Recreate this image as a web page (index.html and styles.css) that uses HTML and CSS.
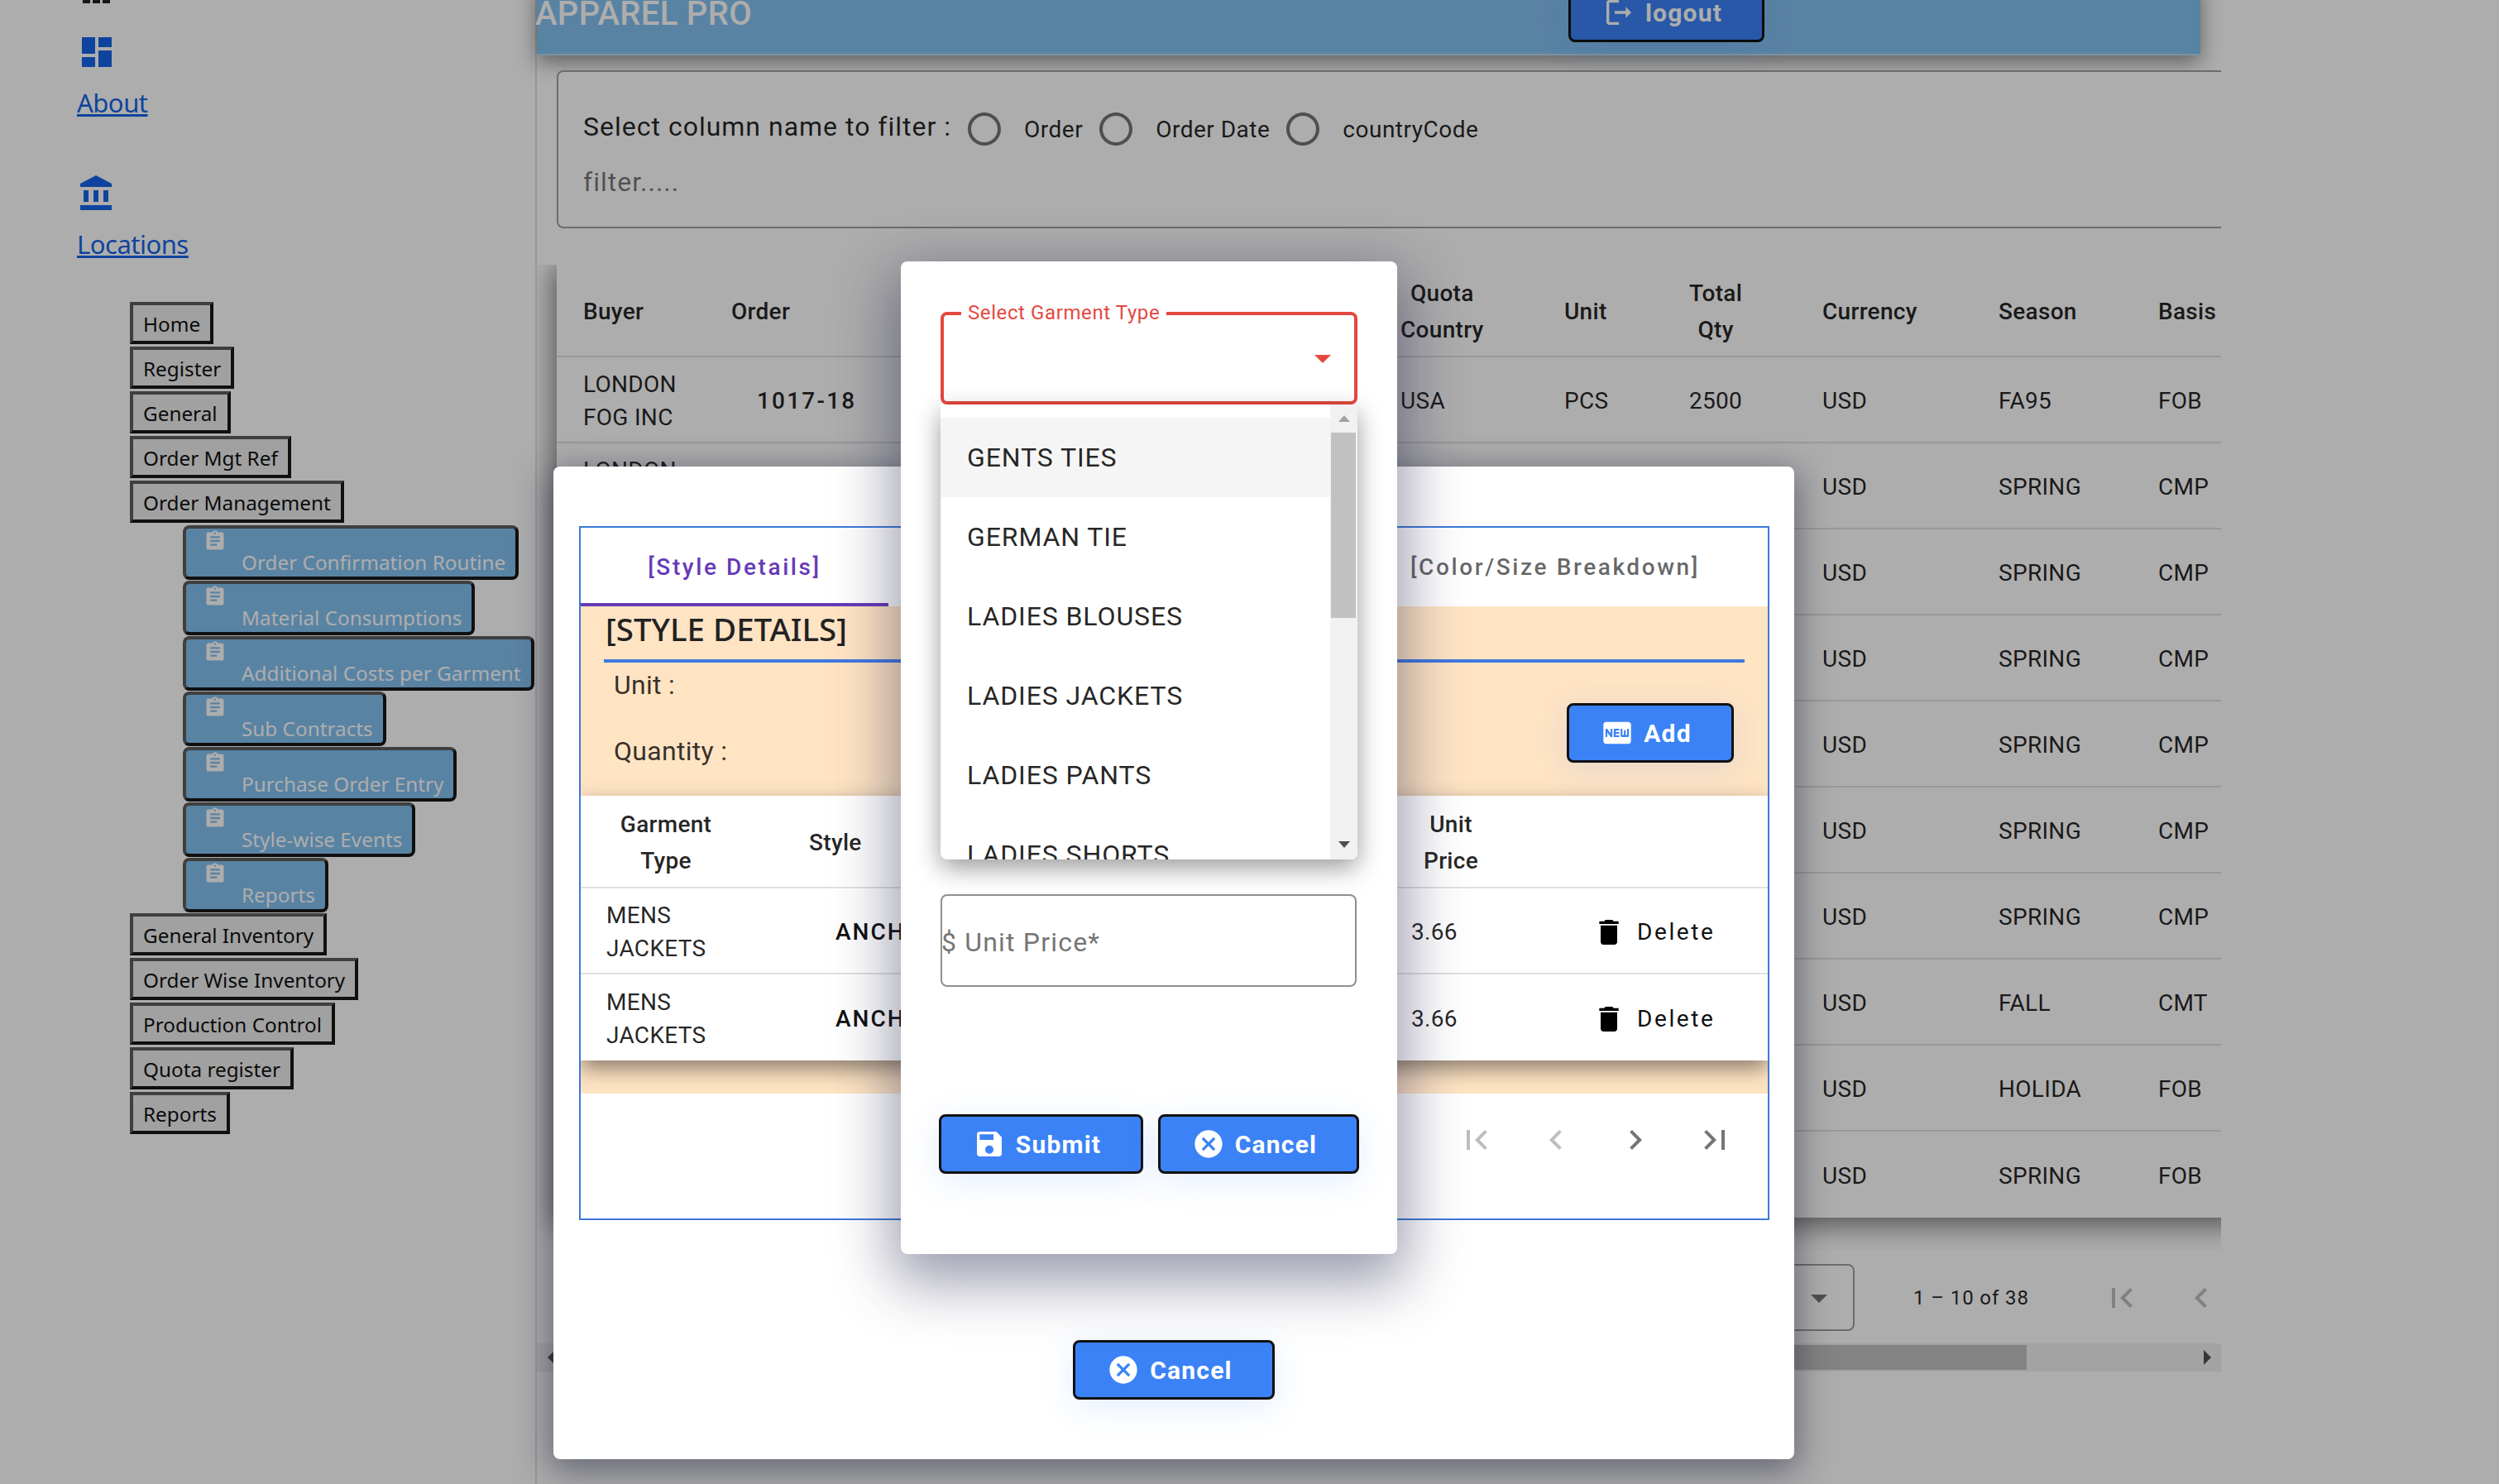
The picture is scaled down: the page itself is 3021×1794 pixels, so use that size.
FILE: index.html
```html
<!DOCTYPE html>
<html lang="en">
<head>
<meta charset="utf-8">
<title>Apparel Pro</title>
<link rel="stylesheet" href="styles.css">
</head>
<body>
<svg class="sprite" aria-hidden="true">
  <symbol id="i-dashboard" viewBox="0 0 24 24"><path d="M3 13h8V3H3v10zm0 8h8v-6H3v6zm10 0h8V11h-8v10zm0-18v6h8V3h-8z"/></symbol>
  <symbol id="i-bank" viewBox="0 0 24 24"><path d="M4 10v7h3v-7H4zm6 0v7h3v-7h-3zM2 22h19v-3H2v3zm14-12v7h3v-7h-3zm-4.500-9L2 6v2h19V6l-9.500-5z"/></symbol>
  <symbol id="i-assign" viewBox="0 0 24 24"><path d="M19 3h-4.180C14.400 1.840 13.300 1 12 1c-1.300 0-2.400.84-2.820 2H5c-1.100 0-2 .9-2 2v14c0 1.100.9 2 2 2h14c1.100 0 2-.9 2-2V5c0-1.100-.9-2-2-2zm-7 0c.55 0 1 .45 1 1s-.45 1-1 1-1-.45-1-1 .45-1 1-1zm2 14H7v-2h7v2zm3-4H7v-2h10v2zm0-4H7V7h10v2z"/></symbol>
  <symbol id="i-logout" viewBox="0 0 24 24"><path d="M5 5h7V3H5c-1.100 0-2 .9-2 2v14c0 1.100.9 2 2 2h7v-2H5V5zm16 7l-4-4v3H9v2h8v3l4-4z"/></symbol>
  <symbol id="i-save" viewBox="0 0 24 24"><path d="M17 3H5c-1.110 0-2 .9-2 2v14c0 1.100.89 2 2 2h14c1.100 0 2-.9 2-2V7l-4-4zm-5 16c-1.660 0-3-1.340-3-3s1.340-3 3-3 3 1.340 3 3-1.340 3-3 3zm3-10H5V5h10v4z"/></symbol>
  <symbol id="i-cancel" viewBox="0 0 24 24"><path d="M12 2C6.470 2 2 6.470 2 12s4.470 10 10 10 10-4.470 10-10S17.530 2 12 2zm5 13.590L15.590 17 12 13.410 8.410 17 7 15.590 10.590 12 7 8.410 8.410 7 12 10.590 15.590 7 17 8.410 13.410 12 17 15.590z"/></symbol>
  <symbol id="i-new" viewBox="0 0 24 24"><path d="M20 4H4c-1.110 0-1.990.89-1.990 2L2 18c0 1.110.89 2 2 2h16c1.110 0 2-.89 2-2V6c0-1.110-.89-2-2-2zM8.500 15H7.300l-2.550-3.500V15H3.500V9h1.250l2.500 3.500V9H8.500v6zm5-4.740H11v1.120h2.500v1.260H11v1.110h2.500V15h-4V9h4v1.260zm7 3.740c0 .55-.45 1-1 1h-4c-.55 0-1-.45-1-1V9h1.250v4.510h1.130V9.990h1.250v3.510h1.120V9h1.250v5z"/></symbol>
  <symbol id="i-delete" viewBox="0 0 24 24"><path d="M6 19c0 1.100.9 2 2 2h8c1.100 0 2-.9 2-2V7H6v12zM19 4h-3.500l-1-1h-5l-1 1H5v2h14V4z"/></symbol>
  <symbol id="i-first" viewBox="0 0 24 24"><path d="M18.410 16.590L13.820 12l4.590-4.590L17 6l-6 6 6 6zM6 6h2v12H6z"/></symbol>
  <symbol id="i-prev" viewBox="0 0 24 24"><path d="M15.410 7.410L14 6l-6 6 6 6 1.410-1.410L10.830 12z"/></symbol>
  <symbol id="i-next" viewBox="0 0 24 24"><path d="M10 6L8.590 7.410 13.170 12l-4.580 4.590L10 18l6-6z"/></symbol>
  <symbol id="i-last" viewBox="0 0 24 24"><path d="M5.590 7.410L10.180 12l-4.590 4.590L7 18l6-6-6-6zM16 6h2v12h-2z"/></symbol>
  <symbol id="i-drop" viewBox="0 0 24 24"><path d="M7 10l5 5 5-5z"/></symbol>
  <symbol id="i-radio" viewBox="0 0 24 24"><path d="M12 2C6.480 2 2 6.480 2 12s4.480 10 10 10 10-4.480 10-10S17.520 2 12 2zm0 18c-4.420 0-8-3.580-8-8s3.580-8 8-8 8 3.580 8 8-3.580 8-8 8z"/></symbol>
</svg>

<div class="app">
  <aside class="sidebar">
    <svg class="cut-icon" viewBox="0 0 33 4"><rect x="0" width="9" height="4"/><rect x="12" width="9" height="4"/><rect x="24" width="9" height="4"/></svg>
    <div class="nav-link first">
      <svg class="nav-icon"><use href="#i-dashboard"/></svg>
      <a href="#">About</a>
    </div>
    <div class="nav-link">
      <svg class="nav-icon"><use href="#i-bank"/></svg>
      <a href="#">Locations</a>
    </div>
    <div class="menu">
      <div class="menu-item">Home</div>
      <div class="menu-item">Register</div>
      <div class="menu-item">General</div>
      <div class="menu-item">Order Mgt Ref</div>
      <div class="menu-item">Order Management</div>
      <div class="submenu">
        <div class="sub-item"><svg class="sub-icon"><use href="#i-assign"/></svg><span>Order Confirmation Routine</span></div>
        <div class="sub-item"><svg class="sub-icon"><use href="#i-assign"/></svg><span>Material Consumptions</span></div>
        <div class="sub-item"><svg class="sub-icon"><use href="#i-assign"/></svg><span>Additional Costs per Garment</span></div>
        <div class="sub-item"><svg class="sub-icon"><use href="#i-assign"/></svg><span>Sub Contracts</span></div>
        <div class="sub-item"><svg class="sub-icon"><use href="#i-assign"/></svg><span>Purchase Order Entry</span></div>
        <div class="sub-item"><svg class="sub-icon"><use href="#i-assign"/></svg><span>Style-wise Events</span></div>
        <div class="sub-item"><svg class="sub-icon"><use href="#i-assign"/></svg><span>Reports</span></div>
      </div>
      <div class="menu-item">General Inventory</div>
      <div class="menu-item">Order Wise Inventory</div>
      <div class="menu-item">Production Control</div>
      <div class="menu-item">Quota register</div>
      <div class="menu-item">Reports</div>
    </div>
  </aside>

  <main class="main">
    <header class="topbar">
      <div class="brand">APPAREL PRO</div>
      <button class="btn btn-logout"><svg class="btn-icon"><use href="#i-logout"/></svg>logout</button>
    </header>
    <div class="content">
      <section class="filter">
        <div class="filter-row">
          <span class="filter-label">Select column name to filter :</span>
          <label class="radio"><svg class="radio-icon"><use href="#i-radio"/></svg>Order</label>
          <label class="radio"><svg class="radio-icon"><use href="#i-radio"/></svg>Order Date</label>
          <label class="radio"><svg class="radio-icon"><use href="#i-radio"/></svg>countryCode</label>
        </div>
        <div class="filter-input">filter.....</div>
      </section>

      <div class="table-clip">
        <div class="orders">
          <div class="orders-row orders-head">
            <span>Buyer</span><span>Order</span><span class="stack">Quota<br>Country</span><span>Unit</span><span class="stack">Total<br>Qty</span><span>Currency</span><span>Season</span><span>Basis</span>
          </div>
          <div class="orders-row">
            <span>LONDON<br>FOG INC</span><span class="order-no">1017-18</span><span>USA</span><span>PCS</span><span>2500</span><span>USD</span><span>FA95</span><span>FOB</span>
          </div>
          <div class="orders-row">
            <span>LONDON<br>FOG INC</span><span></span><span></span><span></span><span></span><span>USD</span><span>SPRING</span><span>CMP</span>
          </div>
          <div class="orders-row"><span></span><span></span><span></span><span></span><span></span><span>USD</span><span>SPRING</span><span>CMP</span></div>
          <div class="orders-row"><span></span><span></span><span></span><span></span><span></span><span>USD</span><span>SPRING</span><span>CMP</span></div>
          <div class="orders-row"><span></span><span></span><span></span><span></span><span></span><span>USD</span><span>SPRING</span><span>CMP</span></div>
          <div class="orders-row"><span></span><span></span><span></span><span></span><span></span><span>USD</span><span>SPRING</span><span>CMP</span></div>
          <div class="orders-row"><span></span><span></span><span></span><span></span><span></span><span>USD</span><span>SPRING</span><span>CMP</span></div>
          <div class="orders-row"><span></span><span></span><span></span><span></span><span></span><span>USD</span><span>FALL</span><span>CMT</span></div>
          <div class="orders-row"><span></span><span></span><span></span><span></span><span></span><span>USD</span><span>HOLIDA</span><span>FOB</span></div>
          <div class="orders-row"><span></span><span></span><span></span><span></span><span></span><span>USD</span><span>SPRING</span><span>FOB</span></div>
        </div>
      </div>

      <div class="pager">
        <div class="pager-select"><svg class="drop-icon"><use href="#i-drop"/></svg></div>
        <span class="pager-text">1 – 10 of 38</span>
        <div class="pager-btns">
          <svg class="page-icon off"><use href="#i-first"/></svg>
          <svg class="page-icon off"><use href="#i-prev"/></svg>
        </div>
      </div>
      <div class="hscroll">
        <span class="arrow-left"></span>
        <span class="hthumb"></span>
        <span class="arrow-right"></span>
      </div>
    </div>
  </main>
</div>

<div class="backdrop"></div>

<div class="modal-outer">
  <div class="tabcard">
    <div class="tabs">
      <div class="tab active">[Style Details]</div>
      <div class="tab second">[Color/Size Breakdown]</div>
    </div>
    <div class="peach">
      <div class="peach-head">
        <h2 class="style-title">[STYLE DETAILS]</h2>
        <div class="style-rule"></div>
        <div class="style-body">
          <div class="style-fields">
            <div>Unit :</div>
            <div>Quantity :</div>
          </div>
          <button class="btn btn-add"><svg class="btn-icon"><use href="#i-new"/></svg>Add</button>
        </div>
      </div>
      <div class="styles-table">
        <div class="styles-row styles-head">
          <span class="garment-head">Garment<br>Type</span><span>Style</span><span class="price-head">Unit<br>Price</span><span></span>
        </div>
        <div class="styles-row">
          <span>MENS<br>JACKETS</span><span class="style-no">ANCHOR</span><span>3.66</span><span class="del"><svg class="del-icon"><use href="#i-delete"/></svg>Delete</span>
        </div>
        <div class="styles-row">
          <span>MENS<br>JACKETS</span><span class="style-no">ANCHOR</span><span>3.66</span><span class="del"><svg class="del-icon"><use href="#i-delete"/></svg>Delete</span>
        </div>
      </div>
    </div>
    <div class="tab-pager">
      <svg class="page-icon off"><use href="#i-first"/></svg>
      <svg class="page-icon off"><use href="#i-prev"/></svg>
      <svg class="page-icon"><use href="#i-next"/></svg>
      <svg class="page-icon"><use href="#i-last"/></svg>
    </div>
  </div>
  <button class="btn btn-cancel-outer"><svg class="btn-icon"><use href="#i-cancel"/></svg>Cancel</button>
</div>

<div class="modal-inner">
  <div class="garment-select">
    <span class="garment-label">Select Garment Type</span>
    <svg class="garment-arrow"><use href="#i-drop"/></svg>
    <div class="dropdown">
      <ul class="options">
        <li class="hover">GENTS TIES</li>
        <li>GERMAN TIE</li>
        <li>LADIES BLOUSES</li>
        <li>LADIES JACKETS</li>
        <li>LADIES PANTS</li>
        <li>LADIES SHORTS</li>
      </ul>
      <div class="vscroll">
        <span class="arrow-up"></span>
        <span class="vthumb"></span>
        <span class="arrow-down"></span>
      </div>
    </div>
  </div>
  <div class="price-field"><span class="dollar">$</span><span class="price-ph">Unit Price*</span></div>
  <div class="inner-actions">
    <button class="btn btn-submit"><svg class="btn-icon"><use href="#i-save"/></svg>Submit</button>
    <button class="btn btn-cancel"><svg class="btn-icon"><use href="#i-cancel"/></svg>Cancel</button>
  </div>
</div>
</body>
</html>
```
FILE: styles.css
```css
* { box-sizing: border-box; }
html, body { margin: 0; height: 1794px; overflow: hidden; background: #fff; }
body { position: relative; width: 3021px; font-family: Roboto, "Liberation Sans", sans-serif; color: rgba(0,0,0,.87); }
.sprite { position: absolute; width: 0; height: 0; }
svg { fill: currentColor; }

.app { display: flex; height: 1794px; }

/* sidebar */
.sidebar { width: 649px; flex: none; border-right: 2px solid #e0e0e0; padding-left: 93px; font-family: "Noto Sans", sans-serif; }
.cut-icon { display: block; width: 33px; height: 4px; margin-left: 7px; color: #222; }
.nav-link { margin-bottom: 63px; }
.nav-link.first { margin-top: 35px; }
.nav-icon { display: block; width: 48px; height: 48px; color: #1565e8; margin-bottom: 14px; }
.nav-link a { display: block; width: max-content; font-size: 31px; line-height: 46px; letter-spacing: -.5px; color: #1565e8; }
.nav-link + .nav-link { margin-bottom: 47px; }

.menu { display: flex; flex-direction: column; align-items: flex-start; gap: 3px; margin-left: 64px; }
.menu-item { height: 51px; padding: 0 12px; line-height: 45px; font-size: 24.3px; white-space: nowrap; color: #111; background: #eee; border: 4px solid; border-color: #5d5d5d #181818 #181818 #5d5d5d; }
.submenu { display: flex; flex-direction: column; align-items: flex-start; gap: 1px; margin: 0 0 -2px 64px; }
.sub-item { height: 66px; padding: 1px 12px 0 21px; border: 4px solid; border-color: #5d5d5d #181818 #181818 #5d5d5d; border-radius: 8px; background: #84c1f0; color: #fff; font-size: 24.3px; line-height: 30px; white-space: nowrap; }
.sub-icon { display: block; width: 28px; height: 28px; }
.sub-item span { display: block; margin: -3px 0 0 46px; }

/* main */
.main { width: 2036px; flex: none; }
.topbar { display: flex; justify-content: space-between; align-items: flex-start; width: 2011px; height: 88px; margin-top: -21px; background: #84c1f0; color: #fff; border-bottom: 2px solid #b9d9f2; box-shadow: 0 8px 24px rgba(0,0,0,.45); }
.brand { margin-left: -2px; font-size: 40px; font-weight: 500; line-height: 75px; letter-spacing: .3px; }
.btn-logout { margin-right: 527px; width: 237px; gap: 10px; }

.btn { display: flex; align-items: center; justify-content: center; height: 72px; padding: 0 10px 0 0; gap: 12px; border: 3px solid #111; border-radius: 8px; background: #3b82f6; color: #fff; font: 700 30px Roboto, sans-serif; letter-spacing: 1.2px; box-shadow: 0 8px 40px rgba(59,130,246,.14); }
.btn-icon { width: 40px; height: 40px; flex: none; }

.content { position: relative; width: 2036px; overflow: hidden; }

.filter { width: 2100px; height: 191px; margin: 18px 0 0 24px; padding: 49px 0 0 30px; background: #fff; border: 2px solid #a0a0a0; border-radius: 8px; }
.filter-row { display: flex; align-items: center; height: 40px; }
.filter-label { font-size: 32px; letter-spacing: 1px; line-height: 40px; margin-top: -6px; }
.radio { display: flex; align-items: center; gap: 24px; margin-left: 16px; font-size: 28px; letter-spacing: .5px; }
.radio-icon { width: 48px; height: 48px; color: rgba(0,0,0,.54); }
.filter-input { margin-top: 24px; font-size: 32px; line-height: 40px; letter-spacing: 1px; color: rgba(0,0,0,.54); }

.table-clip { margin-top: 44px; padding: 0 0 40px 24px; overflow: hidden; height: 1192px; }
.orders { width: 2100px; background: #fff; box-shadow: 0 6px 30px 4px rgba(0,0,0,.5); }
.orders-row { display: grid; grid-template-columns: 179px 809px 198px 151px 161px 213px 193px 196px; align-items: center; height: 104px; padding: 3px 0 0 32px; border-bottom: 2px solid #e0e0e0; font-size: 28px; line-height: 40px; letter-spacing: .3px; }
.orders-head { height: 112px; font-weight: 500; line-height: 44px; }
.stack { width: max-content; text-align: center; }
.order-no { margin-left: 31px; font-weight: 500; letter-spacing: 2.2px; }
.orders-row:last-child { border-bottom: 0; }

.pager { display: flex; align-items: center; height: 112px; padding: 16px 0 15px 1371px; }
.pager-select { display: flex; justify-content: flex-end; align-items: center; width: 222px; height: 81px; padding-right: 17px; border: 2px solid #a0a0a0; border-radius: 8px; }
.drop-icon { width: 48px; height: 48px; color: rgba(0,0,0,.54); }
.pager-text { margin-left: 71px; width: 138px; font-size: 24px; letter-spacing: .9px; white-space: nowrap; }
.pager-btns { display: flex; gap: 48px; margin-left: 90px; }
.page-icon { width: 48px; height: 48px; color: rgba(0,0,0,.54); }
.page-icon.off { color: rgba(0,0,0,.26); }

.hscroll { display: flex; align-items: center; height: 34px; background: #f1f1f1; }
.arrow-left { width: 0; height: 0; margin-left: 13px; border: 9px solid transparent; border-left: 0; border-right: 9px solid #505050; }
.hthumb { width: 1771px; height: 30px; margin-left: 8px; background: #c1c1c1; }
.arrow-right { width: 0; height: 0; margin-left: auto; margin-right: 12px; border: 9px solid transparent; border-right: 0; border-left: 9px solid #505050; }

.backdrop { position: absolute; inset: 0; background: rgba(0,0,0,.32); }

/* outer modal */
.modal-outer { position: absolute; left: 669px; top: 564px; width: 1500px; height: 1200px; padding: 72px 0 0 31px; background: #fff; border-radius: 8px; box-shadow: 0 10px 40px 4px rgba(30,34,60,.5); }
.tabcard { width: 1439px; height: 839px; border: 2px solid #3b7ad8; }
.tabs { display: flex; justify-content: space-between; height: 95px; }
.tab { display: flex; align-items: center; justify-content: center; font-size: 28px; font-weight: 500; letter-spacing: 2.6px; color: rgba(0,0,0,.6); }
.tab.active { width: 372px; color: #673ab7; border-bottom: 4px solid #673ab7; padding-top: 4px; }
.tab.second { padding: 0 82px 0 0; }
.peach { height: 589px; background: #ffe4c4; overflow: hidden; }
.peach-head { height: 229px; padding: 0 28px; }
.style-title { margin: 0; padding-left: 2px; font: 500 38.5px/54px "Noto Sans", sans-serif; color: #222; }
.style-rule { height: 4px; margin-top: 10px; background: #4179e0; }
.style-body { display: flex; justify-content: space-between; align-items: flex-start; }
.style-fields { display: flex; flex-direction: column; gap: 40px; margin: 7px 0 0 12px; font-size: 32px; line-height: 40px; letter-spacing: .3px; color: rgba(0,0,0,.8); }
.btn-add { width: 202px; margin: 49px 13px 0 0; }
.styles-table { background: #fff; box-shadow: 0 10px 24px rgba(0,0,0,.45); }
.styles-row { display: grid; grid-template-columns: 245px 728px 221px 209px; align-items: center; height: 104px; padding: 3px 0 0 31px; border-bottom: 2px solid #e0e0e0; font-size: 28px; line-height: 40px; letter-spacing: .3px; }
.styles-row:last-child { border-bottom: 0; height: 104px; }
.styles-head { height: 112px; font-weight: 500; line-height: 44px; }
.garment-head { width: 144px; text-align: center; }
.price-head { width: 96px; text-align: center; }
.style-no { margin-left: 32px; font-weight: 500; letter-spacing: 2px; color: #111; }
.del { display: flex; align-items: center; gap: 14px; letter-spacing: 2.6px; color: #111; }
.del-icon { width: 40px; height: 40px; margin-left: -2px; color: #000; }
.tab-pager { display: flex; justify-content: flex-end; gap: 48px; margin: 32px 40px 0 0; }

.btn-cancel-outer { width: 244px; margin: 145px 0 0 597px; }

/* inner modal */
.modal-inner { position: absolute; left: 1089px; top: 316px; width: 600px; height: 1200px; padding: 61px 0 0 48px; background: #fff; border-radius: 8px; box-shadow: 0 24px 70px 10px rgba(30,34,70,.45); }
.garment-select { position: relative; display: flex; justify-content: flex-end; align-items: center; width: 504px; height: 112px; padding-right: 14px; border: 4px solid #e5483f; border-radius: 8px; }
.garment-label { position: absolute; left: 21px; top: -16px; padding: 0 8px; background: #fff; color: #e5483f; font-size: 24px; line-height: 26px; letter-spacing: .6px; }
.garment-arrow { width: 48px; height: 48px; color: #e5483f; }
.dropdown { position: absolute; left: -4px; top: 108px; display: flex; width: 504px; height: 550px; background: #fff; border-radius: 0 0 8px 8px; overflow: hidden; box-shadow: 0 10px 30px rgba(0,0,0,.4); }
.options { flex: 1; margin: 0; padding: 16px 0 0; list-style: none; }
.options li { height: 96px; padding-left: 32px; font-size: 32px; line-height: 96px; letter-spacing: .9px; }
.options .hover { background: #f5f5f5; }
.vscroll { position: relative; display: flex; flex-direction: column; width: 33px; background: #f1f1f1; }
.vthumb { width: 30px; height: 224px; margin: 34px 0 0 1px; background: #c1c1c1; }
.arrow-up { position: absolute; left: 10px; top: 13px; width: 0; height: 0; border: 7px solid transparent; border-top: 0; border-bottom: 8px solid #a3a3a3; }
.arrow-down { position: absolute; left: 10px; bottom: 14px; width: 0; height: 0; border: 7px solid transparent; border-bottom: 0; border-top: 8px solid #505050; }
.price-field { display: flex; align-items: center; gap: 9px; width: 503px; height: 112px; margin-top: 592px; padding-top: 3px; border: 2px solid #8f8f8f; border-radius: 8px; font-size: 32px; letter-spacing: 1.2px; color: #757575; }
.dollar { margin-left: -1px; }
.inner-actions { display: flex; gap: 18px; margin: 154px 0 0 -2px; }
.btn-submit { width: 247px; }
.btn-cancel { width: 243px; }
```
